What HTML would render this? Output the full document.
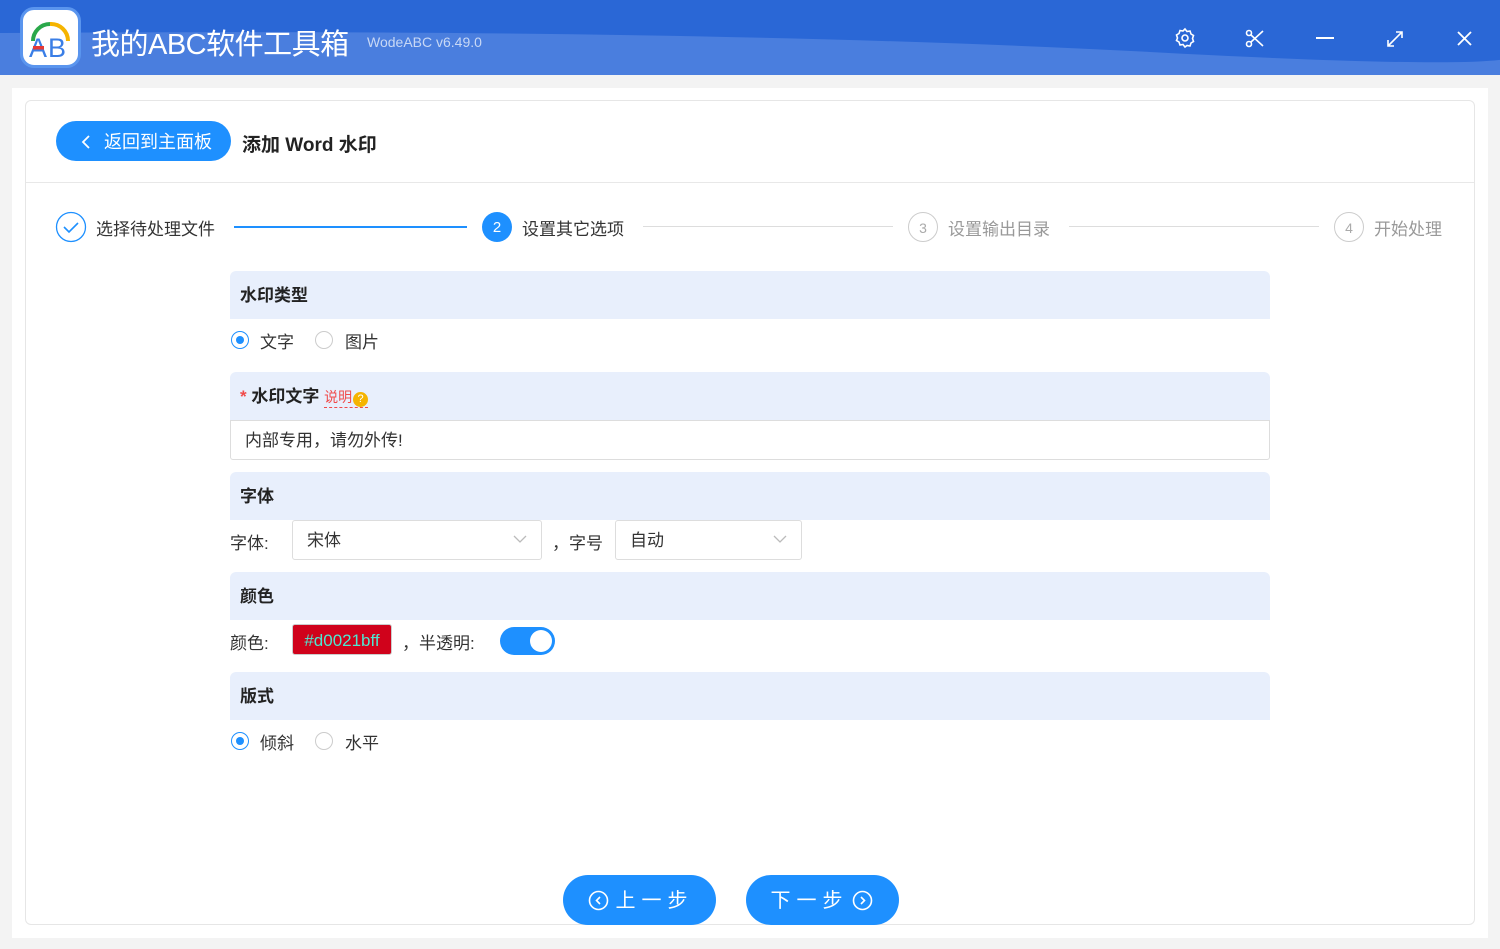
<!DOCTYPE html>
<html><head><meta charset="utf-8"><style>
*{box-sizing:border-box;margin:0;padding:0}
body{width:1500px;height:949px;background:#f3f3f3;font-family:"Liberation Sans","Noto Sans CJK SC",sans-serif;position:relative;overflow:hidden;color:#333}
.top{position:absolute;left:0;top:0;width:1500px;height:75px;background:#2a67d6;overflow:hidden}
.abs{position:absolute}
.outer{position:absolute;left:12px;top:88px;width:1476px;height:850px;background:#fff}
.card{position:absolute;left:25px;top:100px;width:1450px;height:825px;border:1px solid #e6e6e6;border-radius:6px;background:#fff}
.sec{position:absolute;left:230px;width:1040px;height:48px;background:#e8effc;border-radius:6px 6px 0 0;font-weight:bold;font-size:17px;line-height:50px;padding-left:10px;color:#222}
.t{position:absolute;font-size:17px;color:#333;white-space:nowrap}
.radio{position:absolute;width:18px;height:18px;border:1px solid #ccc;border-radius:50%;background:#fff}
.radio.on{border-color:#1e90ff}
.radio.on:after{content:"";position:absolute;left:4px;top:4px;width:8px;height:8px;border-radius:50%;background:#1e90ff}
.sel{position:absolute;height:40px;border:1px solid #ddd;border-radius:3px;background:#fff;font-size:17px;line-height:40px;padding-left:14px}
.btn{position:absolute;top:875px;width:153px;height:50px;border-radius:25px;background:#1e90ff;color:#fff;font-size:20px;line-height:50px;text-align:center;letter-spacing:6px}
</style></head><body>
<div class="top">
<svg class="abs" style="left:0;top:0" width="1500" height="75"><path d="M0 33 Q700 28 1150 52 T1500 44 V75 H0Z" fill="#4a7ede"/></svg>
<div class="abs" style="left:20px;top:7px;width:61px;height:61px;border-radius:14px;background:#fff;border:3px solid #5a95ee"></div>
<svg class="abs" style="left:24px;top:11px" width="53" height="53"><path d="M9 30 A17 17 0 0 1 26 13" stroke="#2aa84a" stroke-width="4" fill="none"/><path d="M26 13 A17 17 0 0 1 44 30" stroke="#f5b400" stroke-width="4" fill="none"/><text x="5" y="46" font-size="27" font-family="Liberation Sans" fill="#3a7ee6">A</text><text x="24" y="46" font-size="27" font-family="Liberation Sans" fill="#3a7ee6">B</text><rect x="9" y="35" width="11" height="3.5" fill="#e53935"/></svg>
<div class="abs" style="left:91px;top:21px;font-size:29px;color:#fff;letter-spacing:-0.5px">我的ABC软件工具箱</div>
<div class="abs" style="left:367px;top:34px;font-size:14px;color:#c8d8f5">WodeABC v6.49.0</div>
<svg class="abs" style="left:1174px;top:27px" width="22" height="22" fill="none" stroke="#fff" stroke-width="1.6"><circle cx="11" cy="11" r="3"/><path d="M11 2l2 2.5 3-.5 1 3 2.5 1.5-1 3 1 3-2.5 1.5-1 3-3-.5L11 20l-2-2.5-3 .5-1-3L2.5 13.5l1-2.5-1-3L5 6.5l1-3 3 .5z"/></svg>
<svg class="abs" style="left:1245px;top:29px" width="20" height="20" fill="none" stroke="#fff" stroke-width="1.6"><circle cx="4" cy="4" r="2.5"/><circle cx="4" cy="15" r="2.5"/><path d="M6 6l12 11M6 13L18 2"/></svg>
<div class="abs" style="left:1316px;top:37px;width:18px;height:2px;background:#fff"></div>
<svg class="abs" style="left:1386px;top:30px" width="18" height="18" fill="none" stroke="#fff" stroke-width="1.6"><path d="M2 16L16 2M10 2h6v6M2 10v6h6"/></svg>
<svg class="abs" style="left:1456px;top:30px" width="17" height="17" stroke="#fff" stroke-width="1.8"><path d="M2 2l13 13M15 2L2 15"/></svg>
</div>
<div class="outer"></div>
<div class="card"></div>
<div class="abs" style="left:26px;top:182px;width:1448px;height:1px;background:#e8e8e8"></div>
<div class="abs" style="left:56px;top:121px;width:175px;height:40px;border-radius:20px;background:#1e90ff;color:#fff;font-size:18px;line-height:43px;padding-left:48px">返回到主面板</div>
<svg class="abs" style="left:80px;top:134px" width="12" height="16" fill="none" stroke="#fff" stroke-width="1.8"><path d="M9 2L3 8l6 6"/></svg>
<div class="abs" style="left:242px;top:130px;font-size:19px;font-weight:bold;color:#222">添加 Word 水印</div>
<svg class="abs" style="left:55px;top:211px" width="32" height="32" fill="none" stroke="#1e90ff" stroke-width="1.3"><circle cx="16" cy="16" r="14.5"/><path d="M9 16l5 5 9-9" stroke-width="1.6"/></svg>
<div class="t" style="left:96px;top:215px">选择待处理文件</div>
<div class="abs" style="left:234px;top:226px;width:233px;height:2px;background:#1e90ff"></div>
<div class="abs" style="left:482px;top:212px;width:30px;height:30px;border-radius:50%;background:#1e90ff;color:#fff;font-size:15px;line-height:31px;text-align:center">2</div>
<div class="t" style="left:522px;top:215px">设置其它选项</div>
<div class="abs" style="left:643px;top:226px;width:250px;height:1px;background:#ddd"></div>
<div class="abs" style="left:908px;top:212px;width:30px;height:30px;border-radius:50%;border:1px solid #ccc;color:#aaa;font-size:14px;line-height:30px;text-align:center">3</div>
<div class="t" style="left:948px;top:215px;color:#999">设置输出目录</div>
<div class="abs" style="left:1069px;top:226px;width:250px;height:1px;background:#ddd"></div>
<div class="abs" style="left:1334px;top:212px;width:30px;height:30px;border-radius:50%;border:1px solid #ccc;color:#aaa;font-size:14px;line-height:30px;text-align:center">4</div>
<div class="t" style="left:1374px;top:215px;color:#999">开始处理</div>
<div class="sec" style="top:271px">水印类型</div>
<div class="radio on" style="left:231px;top:331px"></div><div class="t" style="left:260px;top:328px">文字</div>
<div class="radio" style="left:315px;top:331px"></div><div class="t" style="left:345px;top:328px">图片</div>
<div class="sec" style="top:372px"><span style="color:#f04a4a">*</span> 水印文字 <span style="font-weight:normal;font-size:14px;color:#f04a4a;border-bottom:1px dashed #f04a4a;line-height:17px;display:inline-block">说明<span style="display:inline-block;width:15px;height:15px;border-radius:50%;background:#f5b400;color:#fff;font-size:11px;line-height:15px;text-align:center;margin-left:1px">?</span></span></div>
<div class="sel" style="left:230px;top:420px;width:1040px;border-radius:0 0 3px 3px">内部专用，请勿外传!</div>
<div class="sec" style="top:472px">字体</div>
<div class="t" style="left:230px;top:529px">字体:</div>
<div class="sel" style="left:292px;top:520px;width:250px">宋体</div>
<svg class="abs" style="left:513px;top:534px" width="14" height="10" fill="none" stroke="#bbb" stroke-width="1.3"><path d="M1 2l6 6 6-6"/></svg>
<div class="t" style="left:552px;top:529px">，字号</div>
<div class="sel" style="left:615px;top:520px;width:187px">自动</div>
<svg class="abs" style="left:773px;top:534px" width="14" height="10" fill="none" stroke="#bbb" stroke-width="1.3"><path d="M1 2l6 6 6-6"/></svg>
<div class="sec" style="top:572px">颜色</div>
<div class="t" style="left:230px;top:629px">颜色:</div>
<div class="abs" style="left:292px;top:624px;width:100px;height:31px;background:#d0021b;border:1px solid #ccc;border-radius:3px;color:#4de8d2;font-size:17px;line-height:31px;text-align:center">#d0021bff</div>
<div class="t" style="left:402px;top:629px">，半透明:</div>
<div class="abs" style="left:500px;top:627px;width:55px;height:28px;border-radius:14px;background:#1e90ff"></div>
<div class="abs" style="left:530px;top:630px;width:22px;height:22px;border-radius:50%;background:#fff"></div>
<div class="sec" style="top:672px">版式</div>
<div class="radio on" style="left:231px;top:732px"></div><div class="t" style="left:260px;top:729px">倾斜</div>
<div class="radio" style="left:315px;top:732px"></div><div class="t" style="left:345px;top:729px">水平</div>
<div class="btn" style="left:563px;padding-left:30px;line-height:52px">上一步</div>
<svg class="abs" style="left:588px;top:890px" width="21" height="21" fill="none" stroke="#fff" stroke-width="1.6"><circle cx="10.5" cy="10.5" r="9"/><path d="M12 7l-3.5 3.5L12 14"/></svg>
<div class="btn" style="left:746px;padding-right:26px;line-height:52px">下一步</div>
<svg class="abs" style="left:852px;top:890px" width="21" height="21" fill="none" stroke="#fff" stroke-width="1.6"><circle cx="10.5" cy="10.5" r="9"/><path d="M9 7l3.5 3.5L9 14"/></svg>
</body></html>
